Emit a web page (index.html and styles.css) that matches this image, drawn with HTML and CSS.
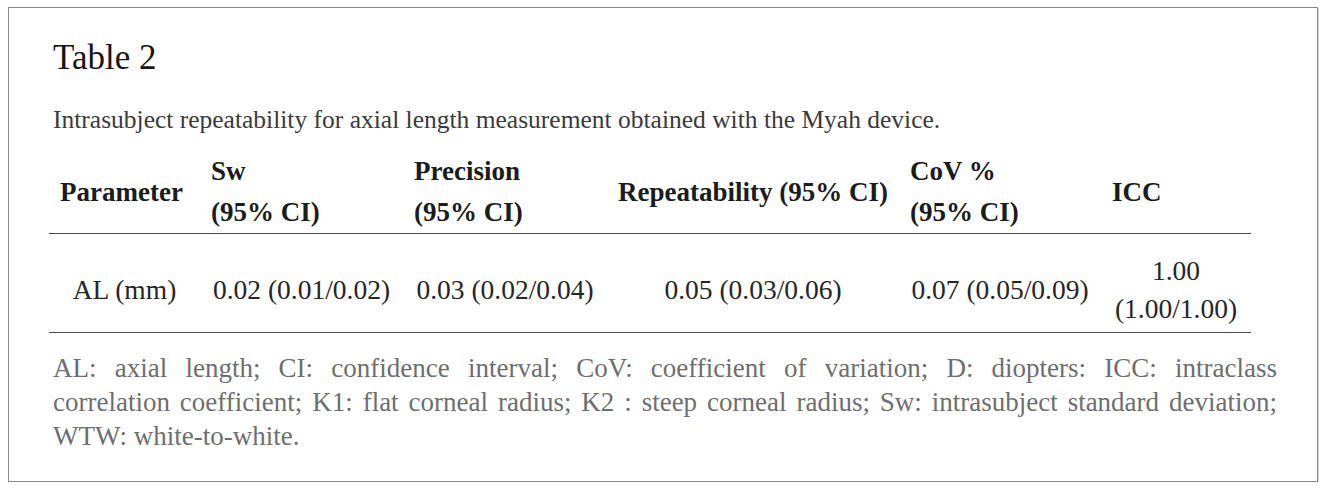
FILE: index.html
```html
<!DOCTYPE html>
<html lang="en">
<head>
<meta charset="utf-8">
<title>Table 2</title>
<link rel="stylesheet" href="styles.css">
</head>
<body>
<div class="card">
  <h2 class="title">Table 2</h2>
  <p class="caption">Intrasubject repeatability for axial length measurement obtained with the Myah device.</p>
  <table class="data">
    <colgroup>
      <col class="c1"><col class="c2"><col class="c3"><col class="c4"><col class="c5"><col class="c6">
    </colgroup>
    <thead>
      <tr>
        <th>Parameter</th>
        <th>Sw<br>(95% CI)</th>
        <th>Precision<br>(95% CI)</th>
        <th>Repeatability (95% CI)</th>
        <th>CoV %<br>(95% CI)</th>
        <th>ICC</th>
      </tr>
    </thead>
    <tbody>
      <tr>
        <td>AL (mm)</td>
        <td>0.02 (0.01/0.02)</td>
        <td>0.03 (0.02/0.04)</td>
        <td>0.05 (0.03/0.06)</td>
        <td>0.07 (0.05/0.09)</td>
        <td>1.00<br>(1.00/1.00)</td>
      </tr>
    </tbody>
  </table>
  <div class="notes">
    <span class="line full">AL: axial length; CI: confidence interval; CoV: coefficient of variation; D: diopters: ICC: intraclass</span>
    <span class="line full">correlation coefficient; K1: flat corneal radius; K2 : steep corneal radius; Sw: intrasubject standard deviation;</span>
    <span class="line">WTW: white-to-white.</span>
  </div>
</div>
</body>
</html>
```
FILE: styles.css
```css
html, body {
  margin: 0;
  padding: 0;
  background: #ffffff;
}

body {
  font-family: "Liberation Serif", "Times New Roman", serif;
}

.card {
  box-sizing: border-box;
  width: 1310px;
  margin: 7px 0 0 8px;
  padding: 30px 40px 28px 44px;
  border: 1px solid #8a8a8a;
  box-shadow: 1px 1px 0 #d0d0d0;
  background: #fff;
}

.title {
  margin: 0;
  font-size: 35px;
  line-height: 40px;
  font-weight: normal;
  color: #161616;
}

.caption {
  margin: 27px 0 0 0;
  font-size: 25.5px;
  line-height: 30px;
  color: #3a3a3a;
}

.data {
  margin: 16px 0 0 -4px;
  width: 1202px;
  table-layout: fixed;
  border-collapse: collapse;
  color: #262626;
}

.c1 { width: 151px; }
.c2 { width: 203px; }
.c3 { width: 204px; }
.c4 { width: 292px; }
.c5 { width: 202px; }
.c6 { width: 150px; }

.data th {
  padding: 0 11px;
  font-size: 27px;
  line-height: 41px;
  font-weight: bold;
  text-align: left;
  vertical-align: middle;
  color: #1c1c1c;
  white-space: nowrap;
  border-bottom: 1px solid #4a4a4a;
}

.data td {
  padding: 18px 11px 4px;
  font-size: 27.5px;
  line-height: 38px;
  text-align: center;
  vertical-align: middle;
  white-space: nowrap;
  border-bottom: 1px solid #4a4a4a;
}

.notes {
  margin: 18px 0 0 0;
  font-size: 27px;
  line-height: 34px;
  color: #6e6e6e;
}

.line {
  display: block;
  white-space: nowrap;
}

.line.full {
  text-align: justify;
  text-align-last: justify;
}
```
